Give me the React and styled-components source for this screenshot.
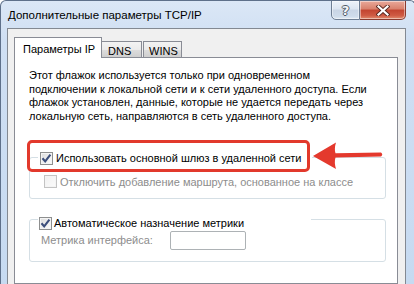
import styled, { createGlobalStyle } from "styled-components";

const GlobalStyle = createGlobalStyle`
  html, body {
    margin: 0;
    padding: 0;
    width: 414px;
    height: 284px;
    overflow: hidden;
    background: #fff;
  }
  body {
    font-family: "Segoe UI", "Liberation Sans", Arial, sans-serif;
    font-size: 11px;
    color: #000;
  }
`;

const Window = styled.div`
  width: 416px;
  height: 284px;
  box-sizing: border-box;
  border: 1px solid #5e708a;
  border-bottom: none;
  border-radius: 6px 6px 0 0;
  background: linear-gradient(to bottom, #dbe7f6 0px, #cfdff3 40px, #c6daf1 100%);
  display: flex;
  flex-direction: column;
  overflow: hidden;
`;

const TitleBar = styled.div`
  height: 27px;
  flex: none;
  display: flex;
  align-items: flex-start;
  padding-left: 7px;
`;

const Title = styled.div`
  flex: 1;
  font-size: 11.5px;
  line-height: 13px;
  margin-top: 8px;
  white-space: nowrap;
`;

const Buttons = styled.div`
  display: flex;
  margin-right: 9px;
  margin-top: -1px;
`;

const CaptionButton = styled.div`
  width: ${(p) => p.w}px;
  height: 20px;
  box-sizing: border-box;
  display: flex;
  align-items: center;
  justify-content: center;
  border: 1px solid ${(p) => (p.close ? "#8a3a2e" : "#6f7f94")};
  border-left: ${(p) => (p.close ? "none" : "1px solid #6f7f94")};
  border-radius: ${(p) => (p.close ? "0 0 5px 0" : "0 0 0 5px")};
  background: ${(p) =>
    p.close
      ? "linear-gradient(to bottom, #e9a99a 0%, #d8806c 45%, #c24430 50%, #cf5a43 80%, #e08c6e 100%)"
      : "linear-gradient(to bottom, #eef3fa 0%, #dde6f2 45%, #c9d5e5 50%, #cfdceb 85%, #e2ebf5 100%)"};
  box-shadow: inset 0 0 0 1px rgba(255, 255, 255, 0.45);
`;

const HelpGlyph = styled.span`
  font-family: "DejaVu Sans", sans-serif;
  font-weight: bold;
  font-size: 13px;
  color: #f4f6f9;
  text-shadow: -1px 0 #4f5a68, 1px 0 #4f5a68, 0 -1px #4f5a68, 0 1px #4f5a68;
  line-height: 1;
  margin-top: 1px;
`;

const Client = styled.div`
  flex: 1;
  margin: 0 9px 0 6px;
  border: 1px solid #838992;
  border-bottom: none;
  background: #f0f0f0;
  padding: 8px 7px 0 6px;
  display: flex;
  flex-direction: column;
`;

const TabRow = styled.div`
  display: flex;
  align-items: flex-end;
  height: 21px;
  flex: none;
  position: relative;
  z-index: 1;
  margin-bottom: -1px;
`;

const Tab = styled.div`
  box-sizing: border-box;
  width: ${(p) => p.w}px;
  height: ${(p) => (p.active ? 21 : 17)}px;
  margin-left: ${(p) => p.ml || 0}px;
  border: 1px solid #898c95;
  border-bottom: ${(p) => (p.active ? "none" : "1px solid #898c95")};
  background: ${(p) =>
    p.active ? "#fff" : "linear-gradient(to bottom, #f3f3f3 0%, #ebebeb 50%, #dddddd 51%, #cfcfcf 100%)"};
  padding-left: ${(p) => p.pl}px;
  padding-top: ${(p) => (p.active ? 4 : 2)}px;
  line-height: 14px;
  white-space: nowrap;
`;

const Panel = styled.div`
  flex: 1;
  border: 1px solid #898c95;
  background: #fff;
  padding: 11px 11px 0 14px;
`;

const Description = styled.p`
  margin: 0;
  line-height: 13.7px;
  white-space: nowrap;
`;

const GroupBox = styled.div`
  margin-top: ${(p) => p.mt}px;
  border: 1px solid #d5dfe5;
  border-radius: 3px;
  padding-bottom: ${(p) => p.pb}px;
`;

const Legend = styled.div`
  position: relative;
  width: 272px;
  height: 15px;
  margin: ${(p) => p.offset}px 0 0 8px;
  padding-left: ${(p) => p.pl}px;
  background: #fff;
  display: flex;
  align-items: center;
  gap: ${(p) => p.gap}px;
  white-space: nowrap;
`;

const Row = styled.div`
  display: flex;
  align-items: center;
  gap: ${(p) => p.gap || 3}px;
  margin-top: ${(p) => p.mt}px;
  padding-left: ${(p) => p.pl}px;
  color: ${(p) => (p.disabled ? "#8d8d8d" : "#000")};
  white-space: nowrap;
`;

const Box = styled.span`
  width: 13px;
  height: 13px;
  box-sizing: border-box;
  flex: none;
  border: 1px solid ${(p) => (p.disabled ? "#c3c3c3" : "#8e8f8f")};
  background: ${(p) =>
    p.disabled
      ? "linear-gradient(135deg, #f0f0f0, #fbfbfb)"
      : "linear-gradient(135deg, #dcdcdc 0%, #f0f0f0 60%, #fcfcfc 100%)"};
  box-shadow: inset 0 0 0 1px #f4f4f4;
  display: flex;
  align-items: center;
  justify-content: center;
`;

const Label = styled.span`
  line-height: 14px;
`;

const MetricLabel = styled.span`
  width: 126px;
  line-height: 14px;
`;

const MetricInput = styled.div`
  width: 76px;
  height: 19px;
  box-sizing: border-box;
  border: 1px solid #adb2b5;
  border-radius: 2px;
  background: #fff;
`;

const Highlight = styled.div`
  position: absolute;
  left: -11px;
  top: -11px;
  width: 283px;
  height: 32px;
  box-sizing: border-box;
  border: 3px solid #e2392c;
  border-radius: 5px;
  pointer-events: none;
`;

const Arrow = styled.svg`
  position: absolute;
  left: 272px;
  top: -11px;
`;

function CheckBox({ checked, disabled }) {
  return (
    <Box disabled={disabled}>
      {checked && (
        <svg width="11" height="11" viewBox="0 0 11 11">
          <path d="M1.5 5.2 L4.2 8.4 L9.4 1.6" fill="none" stroke="#3d4f7c" strokeWidth="2.1" />
        </svg>
      )}
    </Box>
  );
}

function CloseGlyph() {
  return (
    <svg width="14" height="11" viewBox="0 0 14 11">
      <path d="M2.5 1.5 L11.5 9.5 M11.5 1.5 L2.5 9.5" stroke="#5a2a22" strokeWidth="4" strokeLinecap="square" />
      <path d="M2.5 1.5 L11.5 9.5 M11.5 1.5 L2.5 9.5" stroke="#ffffff" strokeWidth="2.2" strokeLinecap="square" />
    </svg>
  );
}

export default function App() {
  return (
    <>
      <GlobalStyle />
      <Window>
        <TitleBar>
          <Title>Дополнительные параметры TCP/IP</Title>
          <Buttons>
            <CaptionButton w={29}>
              <HelpGlyph>?</HelpGlyph>
            </CaptionButton>
            <CaptionButton w={46} close>
              <CloseGlyph />
            </CaptionButton>
          </Buttons>
        </TitleBar>
        <Client>
          <TabRow>
            <Tab active w={88} pl={8}>Параметры IP</Tab>
            <Tab w={41} pl={6} ml={-1}>DNS</Tab>
            <Tab w={39} pl={5} ml={1}>WINS</Tab>
          </TabRow>
          <Panel>
            <Description>
              Этот флажок используется только при одновременном
              <br />
              подключении к локальной сети и к сети удаленного доступа. Если
              <br />
              флажок установлен, данные, которые не удается передать через
              <br />
              локальную сеть, направляются в сеть удаленного доступа.
            </Description>

            <GroupBox mt={33} pb={9}>
              <Legend offset={-7} pl={2} gap={3}>
                <CheckBox checked />
                <Label>Использовать основной шлюз в удаленной сети</Label>
                <Highlight />
                <Arrow width="76" height="32" viewBox="0 0 76 32">
                  <path
                    d="M3 16 L26 2.5 Q24 9 25.5 13.2 L71 12.6 Q73.5 14.6 71 16.6 L25.5 17.4 Q24 22 26 29 Z"
                    fill="#e4392d"
                  />
                </Arrow>
              </Legend>
              <Row mt={9} pl={14} gap={3} disabled>
                <CheckBox disabled />
                <Label>Отключить добавление маршрута, основанное на классе</Label>
              </Row>
            </GroupBox>

            <GroupBox mt={20} pb={11}>
              <Legend offset={-4} pl={1} gap={2}>
                <CheckBox checked />
                <Label>Автоматическое назначение метрики</Label>
              </Legend>
              <Row mt={0} pl={11} disabled>
                <MetricLabel>Метрика интерфейса:</MetricLabel>
                <MetricInput />
              </Row>
            </GroupBox>
          </Panel>
        </Client>
      </Window>
    </>
  );
}
